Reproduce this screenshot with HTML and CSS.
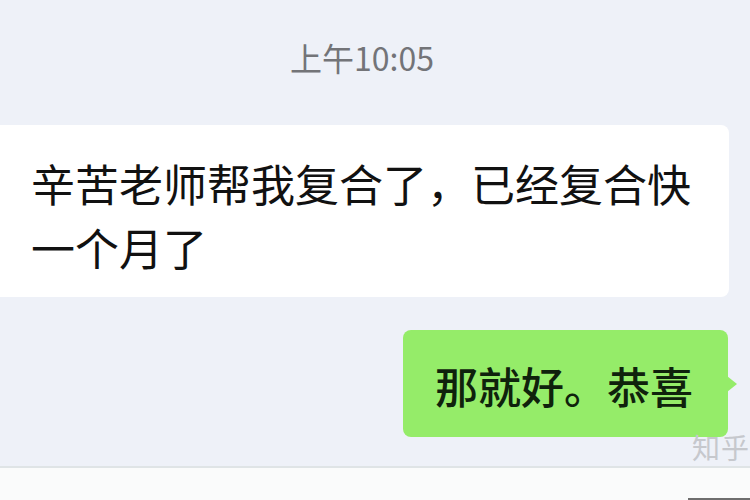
FILE: index.html
```html
<!DOCTYPE html>
<html lang="zh-CN">
<head>
  <meta charset="UTF-8">
  <title>聊天记录</title>
  <link rel="stylesheet" href="styles.css">
</head>
<body>
  <main class="chat">
    <div class="chat-time">上午10:05</div>

    <div class="msg msg-left">
      <div class="bubble bubble-white">辛苦老师帮我复合了，已经复合快一个月了</div>
    </div>

    <div class="msg msg-right">
      <div class="bubble bubble-green">那就好。恭喜</div>
    </div>

    <!-- 水印 -->
    <span class="watermark">知乎</span>
  </main>

  <footer class="input-bar">
    <span class="input-bar-tab"></span>
  </footer>
</body>
</html>
```

FILE: styles.css
```css
/* 聊天背景 */
body {
  margin: 0;
  font-family: "Noto Sans CJK SC", "Noto Sans", sans-serif;
  background: #eef1f8;
  color: #111;
  overflow: hidden;
}
.chat {
  position: relative;
  height: 466px;
  display: flex;
  flex-direction: column;
}
.chat-time {
  text-align: center;
  font-size: 32px;
  line-height: 40px;
  color: #737478;
  padding: 37px 26px 48px 0;
}
.msg {
  display: flex;
}
.msg-left {
  justify-content: flex-start;
}
.msg-right {
  justify-content: flex-end;
  margin-top: 33px;
  padding-right: 22px;
}
.bubble {
  position: relative;
  border-radius: 8px;
}
/* 对方消息 */
.bubble-white {
  width: 680px;
  background: #fff;
  font-size: 44px;
  line-height: 64px;
  padding: 26px 18px 18px 31px;
  border-radius: 0 8px 8px 0;
}
/* 自己的消息 */
.bubble-green {
  background: #95ec69;
  color: #0f220c;
  font-size: 43px;
  font-weight: 500;
  line-height: 64px;
  padding: 23px 35px 20px 32px;
}
.bubble-green::after {
  content: "";
  position: absolute;
  right: -9px;
  top: 50%;
  margin-top: -8px;
  border-style: solid;
  border-width: 8px 0 8px 10px;
  border-color: transparent transparent transparent #95ec69;
}
.watermark {
  position: absolute;
  right: 0;
  bottom: 2px;
  font-size: 28px;
  line-height: 34px;
  color: #c6c8cd;
  letter-spacing: 1px;
}
/* 底部输入栏 */
.input-bar {
  position: relative;
  height: 34px;
  background: #fafbfb;
  border-top: 2px solid #dfe4e6;
}
.input-bar-tab {
  position: absolute;
  right: 0;
  bottom: 0;
  width: 62px;
  height: 4px;
  background: #6e6e6e;
}
```
